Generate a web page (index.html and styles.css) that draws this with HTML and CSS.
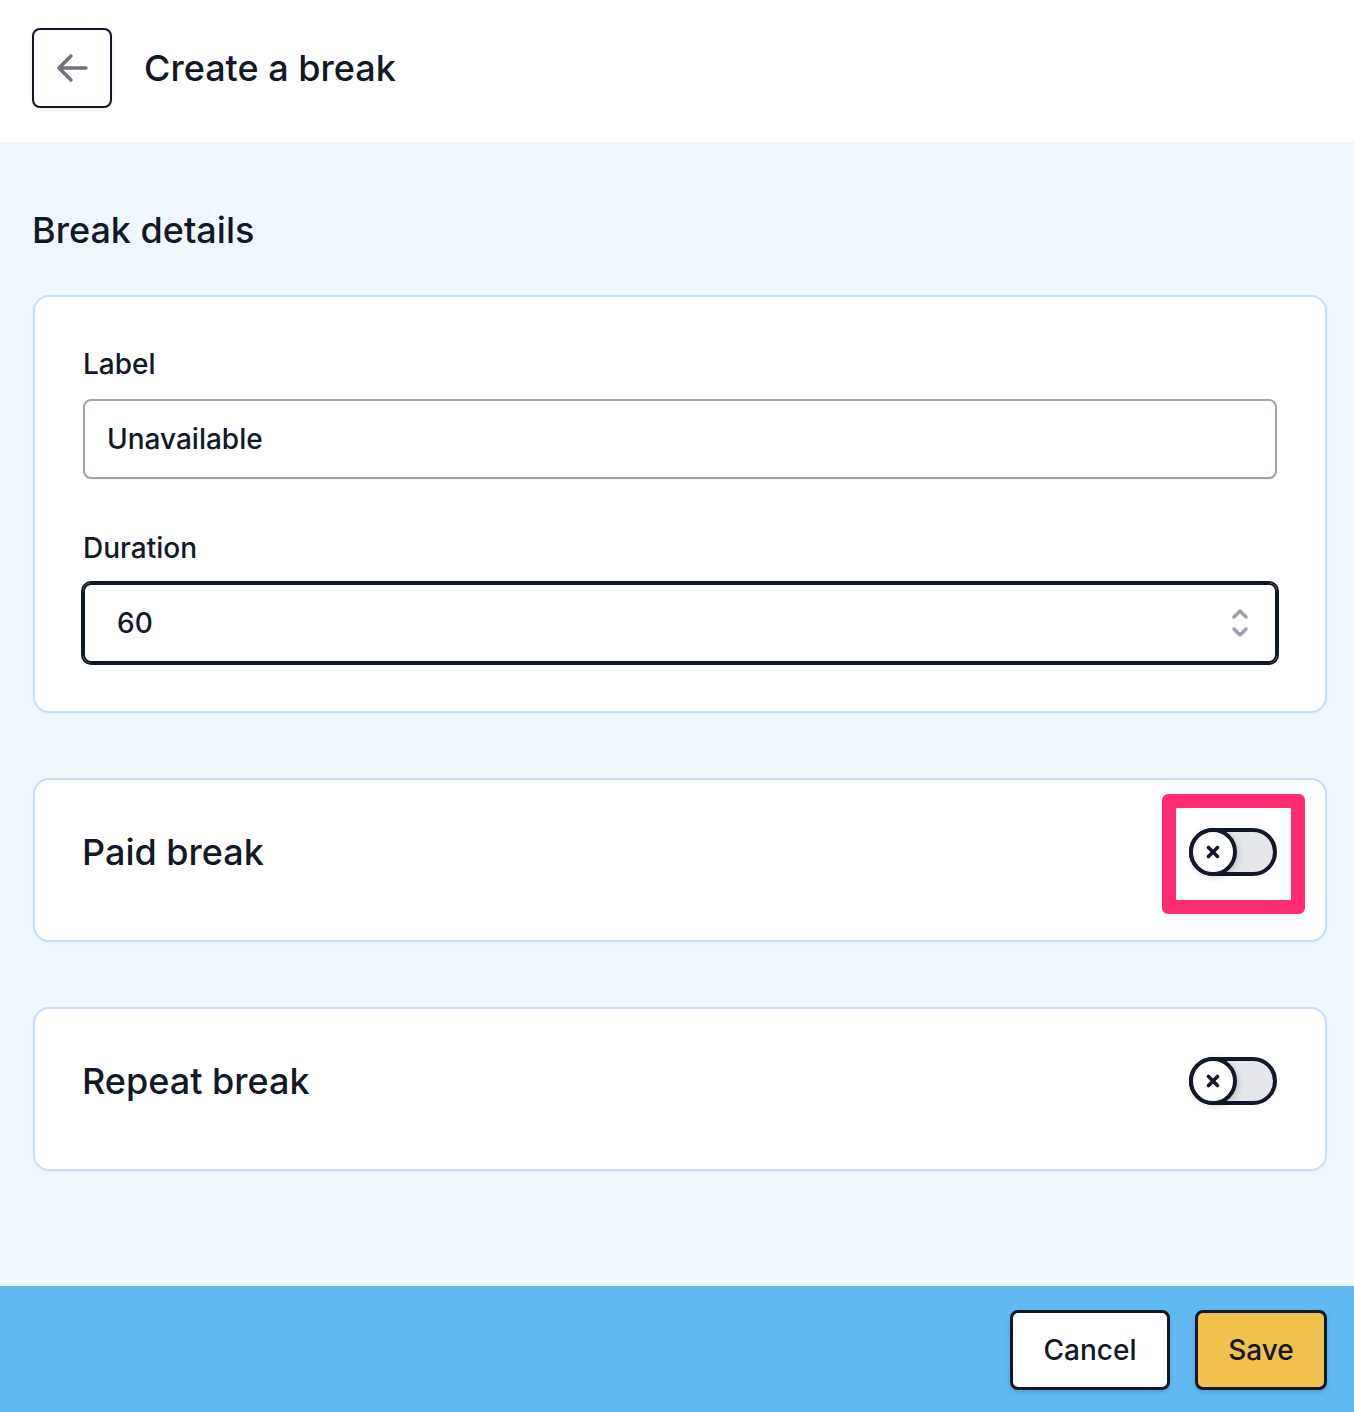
FILE: index.html
```html
<!DOCTYPE html>
<html lang="en">
<head>
    <meta charset="UTF-8">
    <meta name="viewport" content="width=device-width, initial-scale=1.0">
    <title>Create a break</title>
    <link rel="stylesheet" href="styles.css">
</head>
<body>
<header class="topbar">
    <button class="back-btn" aria-label="Back">
        <svg width="36" height="32" viewBox="0 0 36 32" fill="none" stroke="#6b7280" stroke-width="3.5" stroke-linecap="round" stroke-linejoin="round">
            <path d="M32 16H5M17 4L5 16l12 12"/>
        </svg>
    </button>
    <h1>Create a break</h1>
</header>

<main class="content">
    <h2>Break details</h2>

    <section class="card">
        <div class="field">
            <label for="label">Label</label>
            <div class="input-box">
                <input type="text" id="label" value="Unavailable">
            </div>
        </div>
        <div class="field">
            <label for="duration">Duration</label>
            <div class="input-box focused">
                <input type="text" id="duration" value="60" inputmode="numeric">
                <svg class="spinner" width="18" height="32" viewBox="0 0 18 32" fill="none" stroke="#9ca3af" stroke-width="3.5" stroke-linecap="round" stroke-linejoin="round">
                    <path d="M3 10l6-6 6 6M3 22l6 6 6-6"/>
                </svg>
            </div>
        </div>
    </section>

    <section class="card row">
        <span class="row-title">Paid break</span>
        <div class="toggle-wrap highlighted">
            <button class="toggle" aria-label="Paid break">
                <span class="knob">
                    <svg width="14" height="14" viewBox="0 0 14 14" stroke="#111827" stroke-width="3.6" stroke-linecap="round">
                        <path d="M2.5 2.5l9 9M11.5 2.5l-9 9"/>
                    </svg>
                </span>
            </button>
        </div>
    </section>

    <section class="card row">
        <span class="row-title">Repeat break</span>
        <div class="toggle-wrap">
            <button class="toggle" aria-label="Repeat break">
                <span class="knob">
                    <svg width="14" height="14" viewBox="0 0 14 14" stroke="#111827" stroke-width="3.6" stroke-linecap="round">
                        <path d="M2.5 2.5l9 9M11.5 2.5l-9 9"/>
                    </svg>
                </span>
            </button>
        </div>
    </section>
</main>

<footer class="actions">
    <button class="btn btn-cancel">Cancel</button>
    <button class="btn btn-save">Save</button>
</footer>
</body>
</html>
```

FILE: styles.css
```css
* {
    box-sizing: border-box;
    margin: 0;
    padding: 0;
}

body {
    font-family: 'Inter', 'Noto Sans', sans-serif;
    color: #111827;
    background: #f0f7ff;
    font-weight: 500;
}

button {
    font-family: inherit;
    cursor: pointer;
}

.topbar {
    height: 142px;
    background: #fff;
    display: flex;
    align-items: flex-start;
    padding: 28px 32px 0;
    gap: 32px;
}

.back-btn {
    width: 80px;
    height: 80px;
    border: 2px solid #111827;
    border-radius: 8px;
    background: #fff;
    display: flex;
    align-items: center;
    justify-content: center;
    box-shadow: 0 2px 4px rgba(0, 0, 0, 0.08);
}

.topbar h1 {
    font-size: 36px;
    font-weight: 500;
    line-height: 80px;
}

.content {
    padding: 66px 27px 115px 32px;
}

.content h2 {
    font-size: 36px;
    font-weight: 500;
    line-height: 44px;
    margin-bottom: 43px;
}

.card {
    background: #fff;
    border: 2px solid #c7dcfa;
    border-radius: 16px;
    padding: 48px 48px;
    box-shadow: 0 1px 3px rgba(30, 64, 175, 0.05);
    margin-left: 1px;
}

.card + .card {
    margin-top: 65px;
}

.field + .field {
    margin-top: 50px;
}

.field label {
    display: block;
    font-size: 28px;
    line-height: 34px;
    padding-top: 2px;
    margin-bottom: 18px;
}

.input-box {
    height: 80px;
    border: 2px solid #9ca3af;
    border-radius: 8px;
    display: flex;
    align-items: center;
    padding: 0 22px;
    box-shadow: 0 1px 2px rgba(0, 0, 0, 0.05);
}

.input-box.focused {
    border-color: #111827;
    box-shadow: 0 0 0 2px #111827;
    padding: 0 26px 0 32px;
}

.input-box input {
    flex: 1;
    border: none;
    outline: none;
    background: transparent;
    font-family: inherit;
    font-size: 28px;
    font-weight: 500;
    color: #111827;
}

.card.row {
    height: 164px;
    padding: 48px 48px 64px 47px;
    display: flex;
    align-items: center;
    justify-content: space-between;
}

.row-title {
    font-size: 36px;
}

.toggle-wrap {
    position: relative;
}

.toggle-wrap.highlighted::after {
    content: "";
    position: absolute;
    top: -34px;
    left: -27px;
    right: -28px;
    bottom: -38px;
    border: 14px solid #ff2d6f;
    border-radius: 6px;
    pointer-events: none;
}

.toggle {
    display: flex;
    width: 88px;
    height: 48px;
    border: 4px solid #111827;
    border-radius: 24px;
    background: #e5e7eb;
}

.knob {
    width: 48px;
    height: 48px;
    margin: -4px 0 0 -4px;
    border: 4px solid #111827;
    border-radius: 50%;
    background: #fff;
    display: flex;
    align-items: center;
    justify-content: center;
    box-shadow: 2px 2px 6px rgba(0, 0, 0, 0.15);
}

.actions {
    height: 126px;
    background: #61b9f1;
    display: flex;
    justify-content: flex-end;
    align-items: flex-start;
    padding: 24px 27px 0 0;
    gap: 25px;
}

.btn {
    height: 80px;
    border: 3px solid #111827;
    border-radius: 8px;
    font-size: 28px;
    font-weight: 500;
    color: #111827;
    box-shadow: 0 2px 4px rgba(0, 0, 0, 0.15);
}

.btn-cancel {
    width: 160px;
    background: #fff;
}

.btn-save {
    width: 132px;
    background: #f0c14b;
}
```
